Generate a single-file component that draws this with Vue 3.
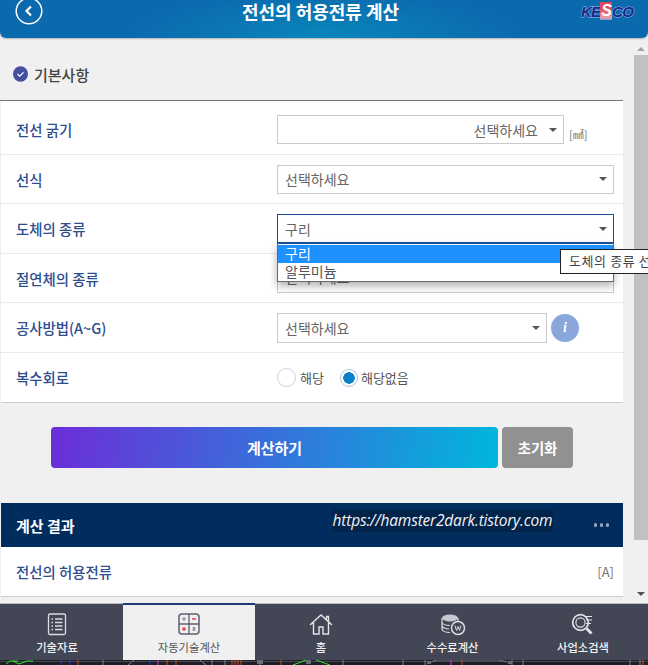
<script setup>
import { ref } from "vue";

const rows = ref([
  { id: 1, label: "전선 굵기", value: "선택하세요", kind: "size" },
  { id: 2, label: "선식", value: "선택하세요", kind: "full" },
  { id: 3, label: "도체의 종류", value: "구리", kind: "open" },
  { id: 4, label: "절연체의 종류", value: "선택하세요", kind: "under" },
  { id: 5, label: "공사방법(A~G)", value: "선택하세요", kind: "info" }
]);
</script>

<template>
  <div class="page">
    <header class="top">
      <svg class="top__back" width="28" height="28" viewBox="0 0 28 28" fill="none" stroke="#fff">
        <circle cx="14" cy="14" r="12.800" stroke-width="1.500" />
        <path d="M16 9.500L11.500 14l4.500 4.500" stroke-width="2.200" />
      </svg>
      <h1>전선의 허용전류 계산</h1>
      <div class="logo"><span>KE</span><b>S</b><span>CO</span></div>
    </header>

    <div class="body">
      <main class="content">
        <h2 class="section">
          <svg width="15" height="16" viewBox="0 0 15 16">
            <ellipse cx="7.500" cy="8" rx="7.500" ry="7.800" fill="#44509f" />
            <path d="M4.500 8l2.200 2.200 3.800-3.800" fill="none" stroke="#fff" stroke-width="1.300" />
          </svg>
          기본사항
        </h2>

        <section class="form">
          <div v-for="row in rows" :key="row.id" class="row">
            <label>{{ row.label }}</label>
            <div class="field">
              <div class="select" :class="'select--' + row.kind">
                <span>{{ row.value }}</span>
                <i class="caret"></i>
              </div>
              <span v-if="row.kind === 'size'" class="unit">[㎟]</span>
              <span v-if="row.kind === 'info'" class="info">i</span>
              <template v-if="row.kind === 'open'">
                <ul class="menu">
                  <li class="menu__on">구리</li>
                  <li>알루미늄</li>
                </ul>
                <div class="tip">도체의 종류 선택</div>
              </template>
            </div>
          </div>
          <div class="row row--last">
            <label>복수회로</label>
            <div class="field radios">
              <span class="radio"></span><span class="radio__text">해당</span>
              <span class="radio radio--on"></span><span class="radio__text">해당없음</span>
            </div>
          </div>
        </section>

        <div class="actions">
          <button class="btn btn--calc">계산하기</button>
          <button class="btn btn--reset">초기화</button>
        </div>

        <section class="result">
          <div class="result__head">
            <strong>계산 결과</strong>
            <em>https://hamster2dark.tistory.com</em>
            <span class="dots"><i></i><i></i><i></i></span>
          </div>
          <div class="result__row">
            <label>전선의 허용전류</label>
            <span>[A]</span>
          </div>
        </section>
      </main>

      <div class="scroll">
        <i class="scroll__up"></i>
        <div class="scroll__thumb"></div>
        <i class="scroll__down"></i>
      </div>
    </div>

    <nav class="nav">
      <a class="nav__item nav__item--first">
        <svg width="24" height="24" viewBox="0 0 24 24" fill="none" stroke="#dcdce2" stroke-width="1.300">
          <rect x="3.500" y="2" width="17" height="20.500" rx="1.500" />
          <path d="M10 7h7.500M10 10.500h7.500M10 14h7.500M10 17.500h7.500M6.500 7h1.500M6.500 10.500h1.500M6.500 14h1.500M6.500 17.500h1.500" stroke-width="1.500" />
        </svg>
        기술자료
      </a>
      <a class="nav__item nav__item--on">
        <svg width="24" height="24" viewBox="0 0 24 24" fill="none">
          <rect x="2" y="2" width="20" height="20" rx="3" stroke="#5e6070" stroke-width="1.500" />
          <path d="M12 2v20M2 12h20" stroke="#5e6070" stroke-width="1.300" />
          <path d="M5 7h4M7 5v4" stroke="#7a7c8a" stroke-width="1" />
          <path d="M15 7h4" stroke="#e0314a" stroke-width="1.400" />
          <rect x="5.500" y="15.500" width="3" height="3" fill="#e0314a" />
          <path d="M17 15v4M15.500 16h3M15.500 18h3" stroke="#7a7c8a" stroke-width="1" />
        </svg>
        자동기술계산
      </a>
      <a class="nav__item">
        <svg width="26" height="24" viewBox="0 0 26 24" fill="none" stroke="#e4e4e8" stroke-width="1.400">
          <path d="M2 13L13 3l11 10M5.500 10.500V22h5.500v-7h4v7h5.500V10.500M18.500 7.500V4.500h2v5" />
        </svg>
        홈
      </a>
      <a class="nav__item">
        <svg width="26" height="24" viewBox="0 0 26 24" fill="none" stroke="#dcdce2" stroke-width="1.200">
          <ellipse cx="10" cy="6" rx="8" ry="3.500" fill="#c8c8d0" stroke="none" />
          <path d="M2 6v11c0 2 3.500 3.500 8 3.500M2 10c0 2 3.500 3.500 8 3.500M2 13.500c0 2 3.500 3.500 7 3.500M18 6v3" />
          <circle cx="18" cy="16" r="6.500" stroke-width="1.500" />
          <path d="M15 13.500l1.500 5 1.500-4 1.500 4 1.500-5" stroke-width="1" />
        </svg>
        수수료계산
      </a>
      <a class="nav__item">
        <svg width="26" height="24" viewBox="0 0 26 24" fill="none" stroke="#e4e4e8">
          <circle cx="10.500" cy="10.500" r="7.800" stroke-width="1.700" />
          <circle cx="10.500" cy="10.500" r="4.600" stroke-width="1.100" />
          <path d="M16.500 16.500l5 5" stroke-width="2.800" />
          <path d="M14 4.500h8M16 8h6M16 11.500h5" stroke-width="1" />
        </svg>
        사업소검색
      </a>
    </nav>

    <svg class="strip" width="648" height="5" viewBox="0 0 648 5" fill="none">
      <path d="M0 1.500h648" stroke="#4a4c52" />
      <path d="M103 0v5M128 5l6-5M200 0l6 5M212 0v5M225 0v5M260 0v5M343 0v5M403 0v5M425 0v5M512 0v5M523 0v5M630 0v5M640 0v5" stroke="#84868c" />
      <path d="M257 0h6v4h-6zM306 0h5v4h-5zM427 1h4v3h-4zM508 1h4v3h-4z" fill="#6a6c72" stroke="none" />
      <path d="M431 2l6-2h62l8 2" stroke="#777a80" />
      <path d="M6 4l4-3h8M13 1l6 3 8-3h6M293 5l13-5M316 0l14 5" stroke="#33e833" />
      <path d="M61 0v5M70 0v5M150 0v5" stroke="#2434e8" />
      <path d="M78 0v5M167 0v5M176 0v5M232 0v5M235 0v5M238 0v5M241 0v5M281 0v5M462 0v5M643 0v5" stroke="#d84a20" />
      <path d="M158 0v5M451 0v5" stroke="#e030d8" />
    </svg>
  </div>
</template>

<style>
html, body {
  margin: 0;
  overflow: hidden;
}
</style>

<style scoped>
.page {
  width: 648px;
  height: 665px;
  display: flex;
  flex-direction: column;
  overflow: hidden;
  background: #f0f0f0;
  font-family: "Noto Sans CJK KR", "Noto Sans", sans-serif;
  font-size: 14px;
  color: #555;
}

.top {
  height: 38px;
  flex: none;
  display: flex;
  align-items: flex-start;
  justify-content: space-between;
  padding: 0 15px;
  box-sizing: border-box;
  border-radius: 0 0 6px 6px;
  background: radial-gradient(ellipse 200px 50px at 50% 100%, #0a86ba, #0b69ae 100%);
  box-shadow: 0 1px 2px rgba(0, 0, 0, 0.25);
  position: relative;
}

.top h1 {
  margin: 0;
  padding-right: 7px;
  font-size: 18px;
  font-weight: 700;
  color: #fff;
  position: absolute;
  left: 0;
  right: 0;
  top: 0;
  line-height: 22px;
  text-align: center;
}

.top__back {
  margin-top: -3px;
  flex: none;
}

.logo {
  font-family: "Liberation Sans", sans-serif;
  font-size: 15px;
  font-style: italic;
  font-weight: 700;
  letter-spacing: -0.8px;
  color: #12288a;
  -webkit-text-stroke: 1px #a9bce6;
  paint-order: stroke fill;
  display: flex;
  align-items: center;
  height: 22px;
}

.logo b {
  color: #fff;
  height: 18px;
  line-height: 17px;
  font-size: 16px;
  padding: 0 1px;
  background: linear-gradient(#e0495a 0 40%, #e8a0aa 85%, #8aa0c8);
  -webkit-text-stroke: 0;
}

.body {
  flex: 1;
  min-height: 0;
  display: flex;
}

.content {
  width: 622px;
  margin-left: 1px;
  flex: none;
}

.section {
  margin: 0 0 0 -1px;
  height: 52px;
  padding: 10px 0 0 13px;
  display: flex;
  align-items: center;
  gap: 6px;
  font-size: 15px;
  font-weight: 500;
  color: #444;
  border-bottom: 1px solid #777;
  width: 610px;
  box-sizing: content-box;
}

.form {
  background: #fff;
  border-bottom: 1px solid #ccc;
}

.row {
  display: flex;
  align-items: center;
  box-sizing: border-box;
  min-height: 50px;
  border-bottom: 1px solid #eaeaea;
  padding-left: 15px;
}

.row:nth-child(even) {
  min-height: 49px;
}

.row:first-child {
  min-height: 54px;
  padding-top: 4px;
}

.row--last {
  border-bottom: 0;
}

label {
  width: 261px;
  flex: none;
  font-size: 14.400px;
  font-weight: 500;
  color: #2d4d8f;
}

.field {
  flex: 1;
  display: flex;
  align-items: center;
  position: relative;
  padding-right: 9px;
}

.select {
  flex: 1;
  height: 29px;
  box-sizing: border-box;
  border: 1px solid #cbcbcb;
  display: flex;
  align-items: center;
  justify-content: space-between;
  padding: 0 6px 0 7px;
  color: #666;
  background: #fff;
  line-height: 1;
}

.select--size {
  flex: none;
  width: 287px;
  justify-content: flex-end;
  gap: 11px;
}

.select--open {
  border-color: #1a4f9c;
}

.select--under {
  padding-bottom: 2px;
}

.select--info {
  flex: none;
  width: 270px;
  height: 30px;
}

.caret {
  width: 0;
  height: 0;
  border: 4px solid transparent;
  border-top: 4px solid #555;
  border-bottom: 0;
}

.unit {
  font-size: 11px;
  margin-left: 5px;
  margin-top: 8px;
  color: #777;
}

.info {
  width: 28px;
  height: 28px;
  margin-left: 4px;
  border-radius: 50%;
  background: #8aa7dc;
  color: #fff;
  font-family: "Liberation Serif", serif;
  font-style: italic;
  font-weight: 700;
  font-size: 14px;
  display: flex;
  align-items: center;
  justify-content: center;
}

.menu {
  position: absolute;
  left: 0;
  top: 29px;
  right: 9px;
  margin: 0;
  padding: 1px 0 0;
  list-style: none;
  background: #fff;
  border: 1px solid #6a6a6a;
  border-top-color: #1a4f9c;
  box-shadow: 0 4px 8px rgba(0, 0, 0, 0.3);
  z-index: 2;
  color: #555;
  font-size: 14px;
}

.menu li {
  height: 18px;
  line-height: 17px;
  padding-left: 7px;
}

.menu .menu__on {
  background: #1e90ff;
  color: #fff;
}

.tip {
  position: absolute;
  left: 283px;
  top: 35px;
  width: 110px;
  height: 25px;
  box-sizing: border-box;
  padding-left: 8px;
  line-height: 22px;
  white-space: nowrap;
  border: 1px solid #222;
  background: #fff;
  color: #444;
  z-index: 3;
  font-size: 13px;
  letter-spacing: 0.6px;
}

.radios {
  font-size: 13px;
  color: #555;
}

.radio {
  width: 19px;
  height: 19px;
  box-sizing: border-box;
  border-radius: 50%;
  border: 1px solid #ccd2d8;
  background: #fff;
  margin-right: 4px;
  flex: none;
}

.radio--on {
  width: 18px;
  height: 18px;
  margin-right: 3px;
  border-color: #a9c4dc;
  background: radial-gradient(circle, #0a80c8 0 5.500px, #fff 6px);
  margin-left: 16px;
}

.actions {
  display: flex;
  gap: 4px;
  padding: 24px 0 35px 50px;
}

.btn {
  height: 41px;
  border: 0;
  border-radius: 4px;
  color: #fff;
  font: inherit;
  font-weight: 700;
  font-size: 15px;
  padding: 0;
}

.btn--calc {
  width: 447px;
  background: linear-gradient(100deg, #6c2dd8, #00b7dd);
}

.btn--reset {
  width: 71px;
  background: #919191;
  font-size: 14.400px;
}

.result__head {
  height: 44px;
  display: flex;
  align-items: center;
  padding: 0 15px;
  background: #002d5e;
  color: #fff;
  position: relative;
}

.result__head strong {
  font-size: 15px;
  font-weight: 700;
}

.result__head em {
  position: absolute;
  left: 331px;
  top: 7px;
  width: 221px;
  height: 22px;
  line-height: 20px;
  background: #02234a;
  font-family: "Open Sans", sans-serif;
  font-size: 15.500px;
  letter-spacing: -0.2px;
  color: #f2f2f2;
  white-space: nowrap;
  overflow: hidden;
  text-align: center;
}

.dots {
  margin-left: auto;
  margin-right: -1px;
  display: flex;
  gap: 2.500px;
}

.dots i {
  width: 3.500px;
  height: 3.500px;
  border-radius: 50%;
  background: #9aa6bc;
}

.result__row {
  height: 50px;
  box-sizing: border-box;
  display: flex;
  align-items: center;
  justify-content: space-between;
  padding: 0 9px 0 15px;
  background: #fff;
  border-bottom: 1px solid #ccc;
  font-size: 13px;
  color: #777;
}

.result__row label {
  width: auto;
}

.scroll {
  margin-left: 11px;
  width: 14px;
  display: flex;
  flex-direction: column;
  align-items: center;
  padding-top: 9px;
  box-sizing: border-box;
}

.scroll__up,
.scroll__down {
  width: 0;
  height: 0;
  border-left: 4px solid transparent;
  border-right: 4px solid transparent;
}

.scroll__up {
  border-bottom: 4px solid #a3a3a3;
}

.scroll__down {
  border-top: 4px solid #505050;
}

.scroll__thumb {
  width: 14px;
  height: 485px;
  margin: 4px 0 52px;
  background: #c1c1c1;
}

.nav {
  height: 56px;
  flex: none;
  display: grid;
  grid-template-columns: 123px 132px 132px 131px 1fr;
  background: #434654;
  box-shadow: 0 -1px 0 #bdbdbd;
}

.nav__item {
  display: flex;
  flex-direction: column;
  align-items: center;
  padding-top: 8px;
  box-sizing: border-box;
  font-size: 11.300px;
  font-weight: 500;
  color: #f2f2f2;
  gap: 3px;
}

.nav__item--first {
  padding-right: 9px;
}

.nav__item--on {
  background: #f0f0f0;
  border-top: 2px solid #1a3a7c;
  margin-top: -1px;
  padding-top: 7px;
  color: #555;
  font-weight: 400;
}

.strip {
  flex: none;
  display: block;
  background: #1c1f28;
}
</style>
